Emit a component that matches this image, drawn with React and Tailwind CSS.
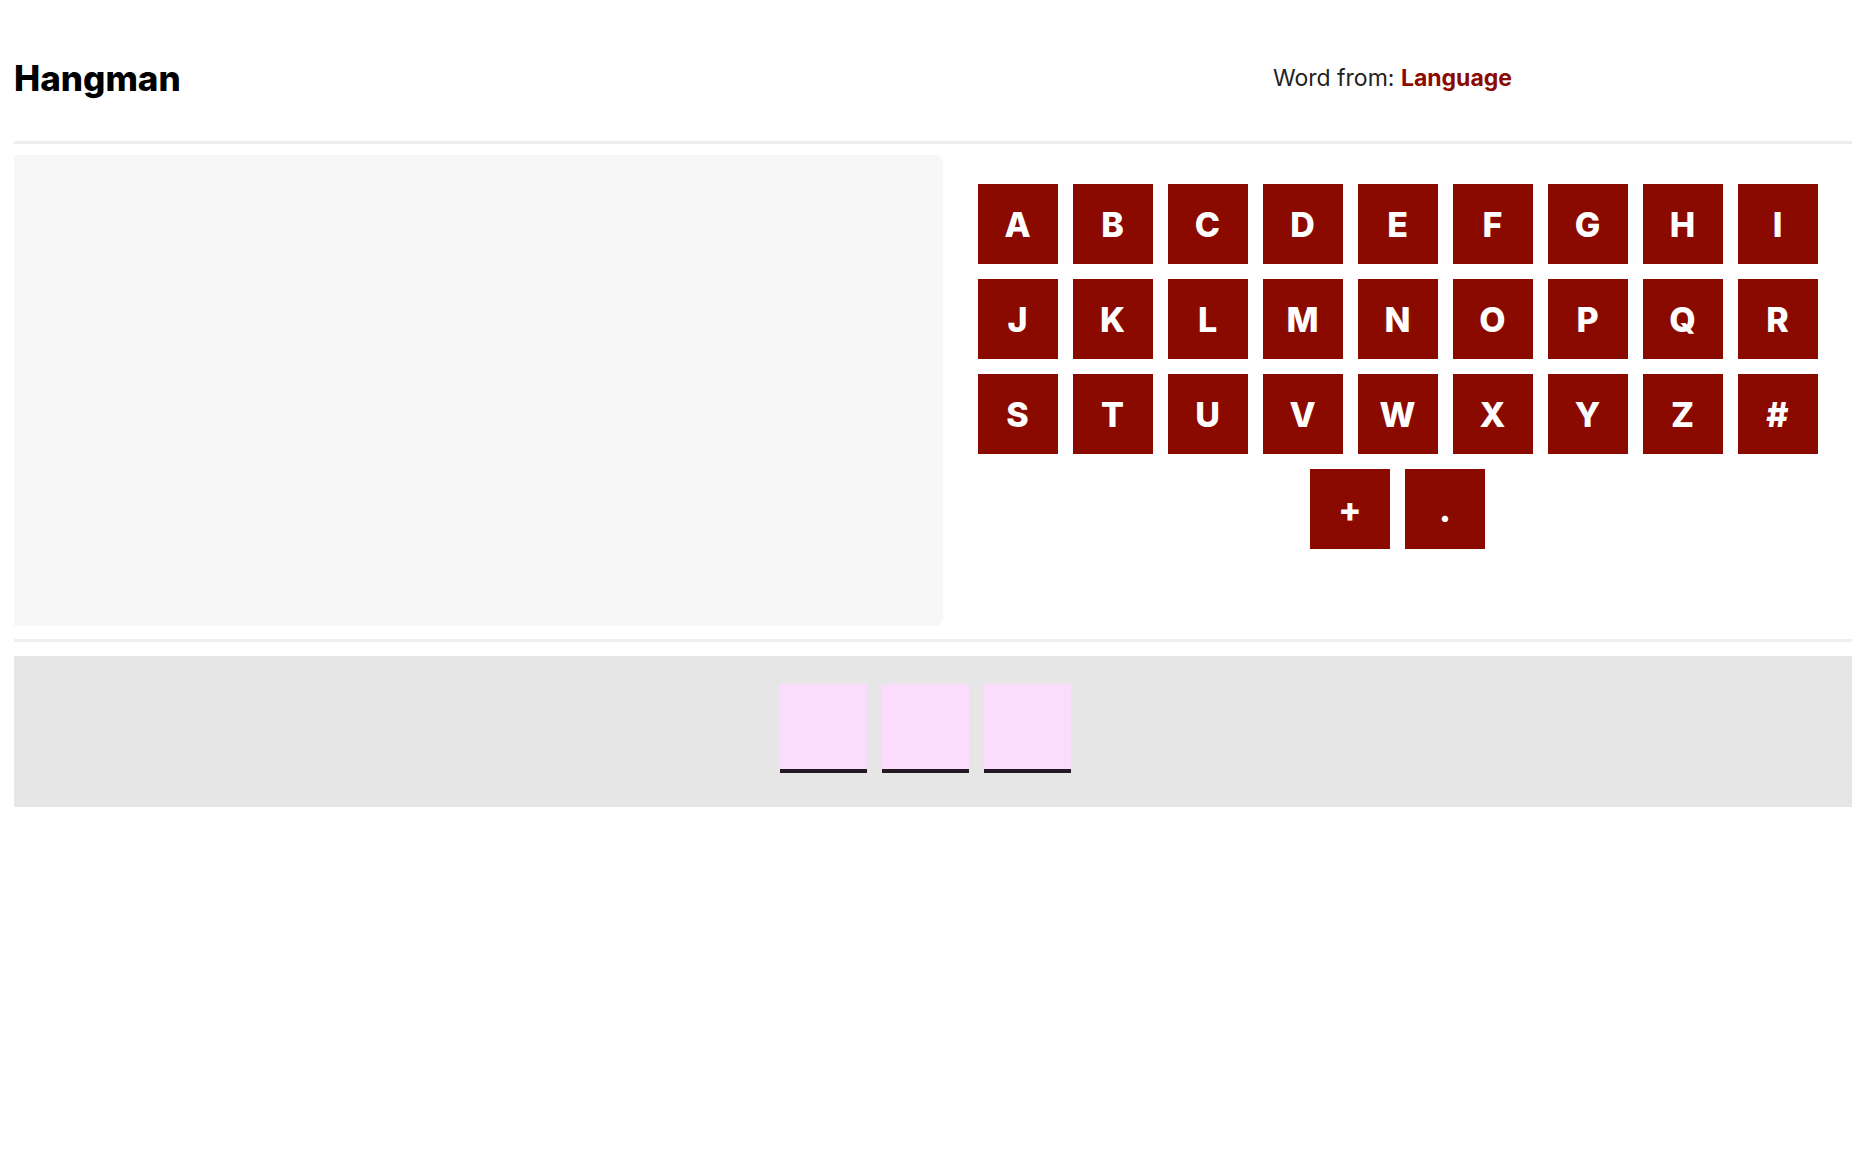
import React, { useState } from 'react';

const KEYS = [
  'A', 'B', 'C', 'D', 'E', 'F', 'G', 'H', 'I',
  'J', 'K', 'L', 'M', 'N', 'O', 'P', 'Q', 'R',
  'S', 'T', 'U', 'V', 'W', 'X', 'Y', 'Z', '#',
  '+', '.',
];

export default function App() {
  const [guessed, setGuessed] = useState([]);
  const word = ['', '', ''];

  const guess = (k) => {
    if (!guessed.includes(k)) setGuessed([...guessed, k]);
  };

  return (
    <div className="min-h-screen bg-white px-[14px] font-['Inter',sans-serif] text-black">
      {/* header */}
      <header className="mt-[48px] flex h-[60px] items-center">
        <div className="w-[929px]">
          <h1 className="text-[35px] font-extrabold leading-none">Hangman</h1>
        </div>
        <div className="flex-1 pr-[10px] text-center text-[23px] text-[#222]">
          Word from: <span className="font-bold text-[#8b0a00]">Language</span>
        </div>
      </header>

      <div className="mt-[33px] h-[3px] bg-[#eeeeee]" />

      {/* board */}
      <section className="mt-[11px] flex">
        <div className="h-[471px] w-[929px] rounded-r-lg bg-[#f7f7f7]" />
        <div className="flex-1 pt-[29px]">
          <div className="mx-auto flex w-[840px] flex-wrap justify-center gap-[15px]">
            {KEYS.map((k) => (
              <button
                key={k}
                onClick={() => guess(k)}
                className="flex h-[80px] w-[80px] items-center justify-center bg-[#8b0a00] text-[34px] font-extrabold text-white"
              >
                {k}
              </button>
            ))}
          </div>
        </div>
      </section>

      <div className="mt-[13px] h-[3px] bg-[#eeeeee]" />

      {/* word slots */}
      <section className="mt-[14px] flex h-[151px] items-start justify-center bg-[#e6e6e6] pt-[28px]">
        {word.map((ch, i) => (
          <div
            key={i}
            className="mr-[15px] flex h-[89px] w-[87px] items-center justify-center border-b-4 border-[#231a23] bg-[#fcdcfc] text-[36px] font-bold"
          >
            {ch}
          </div>
        ))}
      </section>
    </div>
  );
}
